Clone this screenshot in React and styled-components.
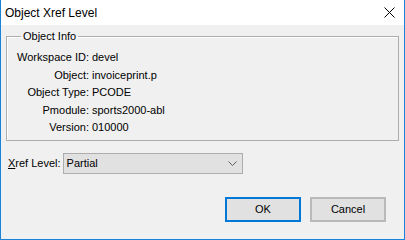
import React from "react";
import styled, { createGlobalStyle } from "styled-components";

const Global = createGlobalStyle`
  html, body { margin: 0; padding: 0; background: #ffffff; }
  body { font-family: "Liberation Sans", Arial, sans-serif; }
`;

const Window = styled.div`
  width: 405px;
  height: 240px;
  box-sizing: border-box;
  border: 1px solid #1883d7;
  border-top: none;
  display: flex;
  flex-direction: column;
  background: #f0f0f0;
  overflow: hidden;
`;

const TitleBar = styled.div`
  height: 25px;
  flex: none;
  background: #ffffff;
  display: flex;
  align-items: center;
  justify-content: space-between;
  padding: 0 9px 0 4px;
  font-family: "Liberation Sans", Arial, sans-serif;
  font-size: 12px;
  color: #000;
`;

const Title = styled.span`
  padding-top: 1px;
`;

const CloseIcon = styled.svg`
  width: 11px;
  height: 11px;
  display: block;
`;

const Body = styled.div`
  flex: 1;
  display: flex;
  flex-direction: column;
  padding: 4px 5px 0 5px;
  font-size: 11px;
  color: #000;
`;

const Group = styled.fieldset`
  margin: 0;
  padding: 6px 0 3px 8px;
  border: 1px solid #adadad;
  box-shadow: inset 1px 1px 0 #ffffff;
  min-width: 0;
`;

const Legend = styled.legend`
  margin-left: 6px;
  padding: 0 2px;
  line-height: 14px;
  font-size: 11px;
`;

const InfoGrid = styled.div`
  display: grid;
  grid-template-columns: 74px auto;
  column-gap: 3px;
  line-height: 17.5px;
`;

const Label = styled.span`
  text-align: right;
  white-space: nowrap;
`;

const Value = styled.span`
  white-space: nowrap;
`;

const XrefRow = styled.div`
  display: flex;
  align-items: center;
  margin-top: 12px;
  padding-left: 2px;
  gap: 2px;
`;

const Underlined = styled.span`
  text-decoration: underline;
`;

const Combo = styled.div`
  width: 180px;
  height: 21px;
  box-sizing: border-box;
  border: 1px solid #adadad;
  background: #e1e1e1;
  display: flex;
  align-items: center;
  justify-content: space-between;
  padding: 0 5px 0 3px;
`;

const Chevron = styled.svg`
  width: 9px;
  height: 5px;
  display: block;
`;

const ButtonRow = styled.div`
  display: flex;
  justify-content: flex-end;
  gap: 9px;
  margin-top: 23px;
  padding-right: 13px;
`;

const Button = styled.button`
  width: 76px;
  height: 25px;
  box-sizing: border-box;
  margin: 0;
  padding: 0;
  font-family: "Liberation Sans", Arial, sans-serif;
  font-size: 11px;
  color: #000;
  background: #e1e1e1;
  border: ${(p) => (p.$default ? "2px solid #0078d7" : "2px solid #b9b9b9")};
`;

const rows = [
  ["Workspace ID:", "devel"],
  ["Object:", "invoiceprint.p"],
  ["Object Type:", "PCODE"],
  ["Pmodule:", "sports2000-abl"],
  ["Version:", "010000"],
];

export default function App() {
  return (
    <>
      <Global />
      <Window>
        <TitleBar>
          <Title>Object Xref Level</Title>
          <CloseIcon viewBox="0 0 11 11">
            <path d="M0.5 0.5 L10.5 10.5 M10.5 0.5 L0.5 10.5" stroke="#000" strokeWidth="1" fill="none" />
          </CloseIcon>
        </TitleBar>
        <Body>
          <Group>
            <Legend>Object Info</Legend>
            <InfoGrid>
              {rows.map(([l, v]) => (
                <React.Fragment key={l}>
                  <Label>{l}</Label>
                  <Value>{v}</Value>
                </React.Fragment>
              ))}
            </InfoGrid>
          </Group>
          <XrefRow>
            <span>
              <Underlined>X</Underlined>ref Level:
            </span>
            <Combo>
              <span>Partial</span>
              <Chevron viewBox="0 0 9 5">
                <path d="M0.5 0.5 L4.5 4.5 L8.5 0.5" stroke="#606060" strokeWidth="1" fill="none" />
              </Chevron>
            </Combo>
          </XrefRow>
          <ButtonRow>
            <Button $default>OK</Button>
            <Button>Cancel</Button>
          </ButtonRow>
        </Body>
      </Window>
    </>
  );
}
